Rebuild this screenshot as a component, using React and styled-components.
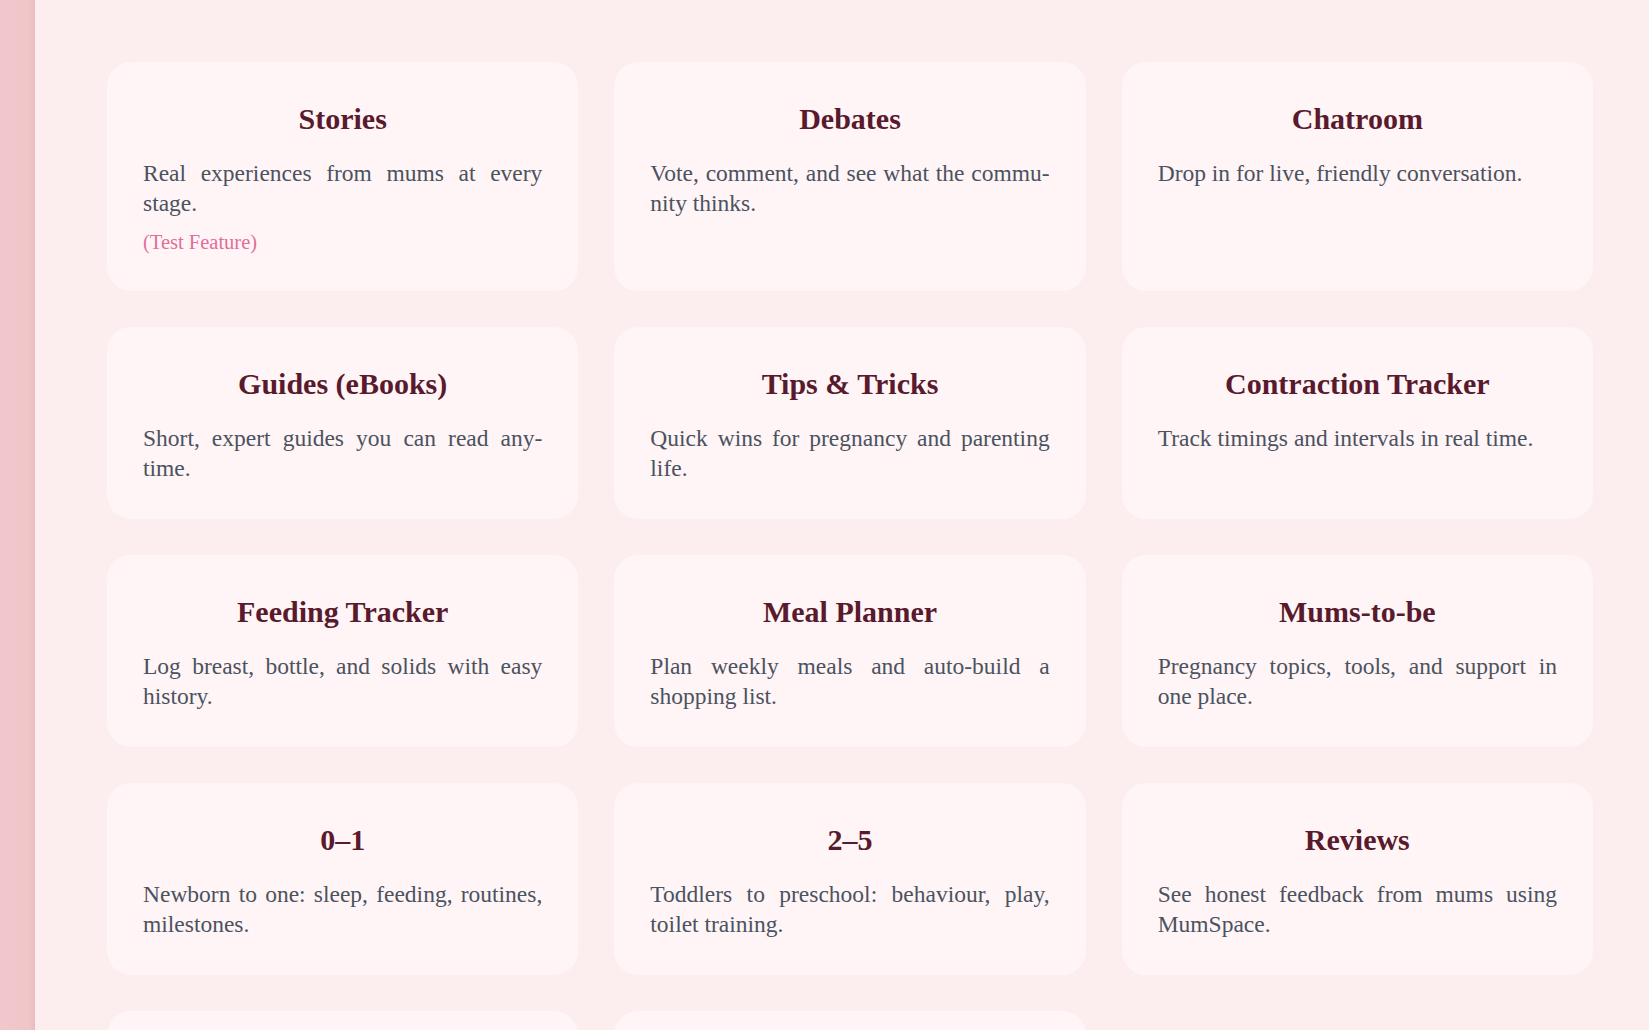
import styled, { createGlobalStyle } from "styled-components";

const SHY = "\u00AD"; // soft hyphen, the reference breaks a few long words

const FEATURES = [
  { id: "stories", title: "Stories", text: "Real experiences from mums at every stage.", note: "(Test Feature)" },
  { id: "debates", title: "Debates", text: `Vote, comment, and see what the commu${SHY}nity thinks.` },
  { id: "chat", title: "Chatroom", text: "Drop in for live, friendly conversation." },
  { id: "guides", title: "Guides (eBooks)", text: `Short, expert guides you can read any${SHY}time.` },
  { id: "tips", title: "Tips & Tricks", text: "Quick wins for pregnancy and parenting life." },
  { id: "contraction", title: "Contraction Tracker", text: "Track timings and intervals in real time." },
  { id: "feeding", title: "Feeding Tracker", text: "Log breast, bottle, and solids with easy history." },
  { id: "meals", title: "Meal Planner", text: "Plan weekly meals and auto-build a shopping list." },
  { id: "mumstobe", title: "Mums-to-be", text: "Pregnancy topics, tools, and support in one place." },
  { id: "zero", title: "0–1", text: "Newborn to one: sleep, feeding, routines, milestones." },
  { id: "two", title: "2–5", text: "Toddlers to preschool: behaviour, play, toilet training." },
  { id: "reviews", title: "Reviews", text: "See honest feedback from mums using MumSpace." },
  { id: "events", title: "Events", text: "Meet-ups, classes, and local groups near you." },
  { id: "support", title: "Support", text: "Get help from our team whenever you need it." },
];

const GlobalStyle = createGlobalStyle`
  * { box-sizing: border-box; }
  body {
    margin: 0;
    background: #fcedee;
    font-family: "Liberation Serif", "Times New Roman", serif;
  }
`;

export default function App() {
  return (
    <>
      <GlobalStyle />
      <Page>
        <Sidebar />
        <Main>
          <Grid>
            {FEATURES.map((f) => (
              <Card key={f.id}>
                <Title>{f.title}</Title>
                <Text lang="en">{f.text}</Text>
                {f.note && <Note>{f.note}</Note>}
              </Card>
            ))}
          </Grid>
        </Main>
      </Page>
    </>
  );
}

const Page = styled.div`
  display: flex;
  min-height: 100vh;
`;

const Sidebar = styled.aside`
  flex: 0 0 35px;
  height: 100vh;
  position: sticky;
  top: 0;
  background: linear-gradient(to right, #f2c7cb 0, #f1c5c9 29px, #e9bbbf 35px);
`;

const Main = styled.main`
  flex: 1;
  padding: 62px 56px 40px 72px;
`;

const Grid = styled.div`
  display: grid;
  grid-template-columns: repeat(3, 1fr);
  gap: 36px;
`;

const Card = styled.section`
  background: #fff5f6;
  border-radius: 24px;
  padding: 36px;
`;

const Title = styled.h3`
  margin: 0 0 18px;
  font-size: 30px;
  line-height: 42px;
  font-weight: 700;
  text-align: center;
  color: #581a2c;
`;

const Text = styled.p`
  margin: 0;
  font-size: 23.5px;
  line-height: 30px;
  text-align: justify;
  color: #4b5260;
`;

const Note = styled.p`
  margin: 12px 0 0;
  font-size: 20.5px;
  line-height: 1.2;
  color: #e26d98;
`;
